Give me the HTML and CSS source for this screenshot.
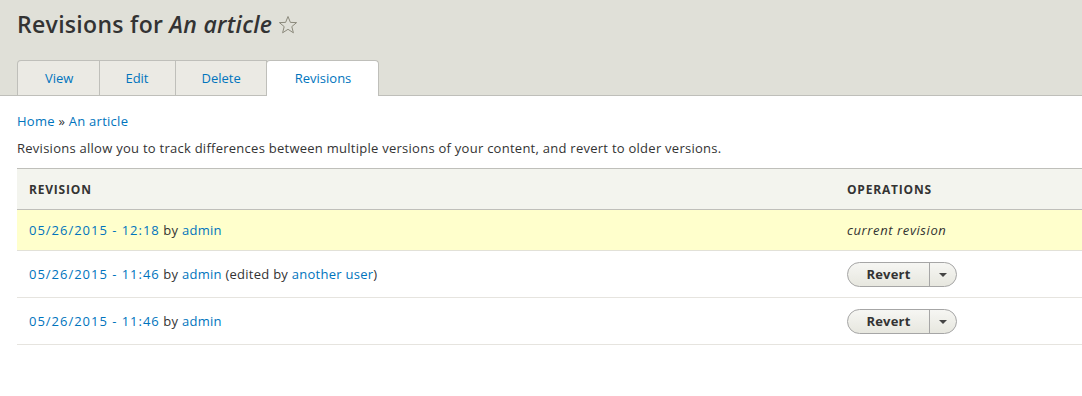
FILE: index.html
```html
<!DOCTYPE html>
<html lang="en">
  <head>
    <meta charset="UTF-8" />
    <title>Revisions for An article</title>
    <link rel="stylesheet" href="styles.css">
  </head>
  <body>
    <div class="header">
      <h1 class="page-title">
        Revisions for <em>An article</em>
        <svg class="star" width="20" height="20" viewBox="0 0 20 20">
          <path d="M10 1.5 L12.4 7.4 L18.6 7.6 L13.8 11.6 L15.4 17.8 L10 14.3 L4.6 17.8 L6.2 11.6 L1.4 7.6 L7.6 7.4 Z" fill="none" stroke="#8c8a7c" stroke-width="1" stroke-linejoin="round" />
        </svg>
      </h1>
      <ul class="tabs">
        <li class="tab first"><a href="#">View</a></li>
        <li class="tab"><a href="#">Edit</a></li>
        <li class="tab"><a href="#">Delete</a></li>
        <li class="tab active"><a href="#">Revisions</a></li>
      </ul>
    </div>

    <div class="content">
      <div class="breadcrumb"><a href="#">Home</a> » <a href="#">An article</a></div>
      <p class="help">Revisions allow you to track differences between multiple versions of your content, and revert to older versions.</p>

      <table class="revisions">
        <thead>
          <tr>
            <th>Revision</th>
            <th class="ops">Operations</th>
          </tr>
        </thead>
        <tbody>
          <tr class="current">
            <td><a class="date" href="#">05/26/2015 - 12:18</a> by <a href="#">admin</a></td>
            <td class="ops"><em>current revision</em></td>
          </tr>
          <tr>
            <td><a class="date" href="#">05/26/2015 - 11:46</a> by <a href="#">admin</a> (edited by <a href="#">another user</a>)</td>
            <td class="ops">
              <div class="split-button">
                <button class="main">Revert</button><button class="toggle"><span class="caret"></span></button>
              </div>
            </td>
          </tr>
          <tr>
            <td><a class="date" href="#">05/26/2015 - 11:46</a> by <a href="#">admin</a></td>
            <td class="ops">
              <div class="split-button">
                <button class="main">Revert</button><button class="toggle"><span class="caret"></span></button>
              </div>
            </td>
          </tr>
        </tbody>
      </table>
    </div>
  </body>
</html>
```

FILE: styles.css
```css
body {
  margin: 0;
  font-family: "Open Sans", "DejaVu Sans", sans-serif;
  font-size: 13px;
  letter-spacing: 0.26px;
  color: #333;
  background: #fff;
}
a {
  color: #0074bd;
  text-decoration: none;
}
.header {
  background-color: #e0e0d8;
  padding: 9px 0 0 17px;
  border-bottom: 1px solid #bfbfba;
}
.page-title {
  margin: 0;
  font-size: 23px;
  font-weight: 600;
  letter-spacing: 0.3px;
  line-height: 30px;
  color: #333;
  display: flex;
  align-items: center;
  gap: 6px;
}
.page-title em {
  font-style: italic;
}
.star {
  margin-top: 1px;
}
.tabs {
  list-style: none;
  margin: 21px 0 0 0;
  padding: 0;
  display: flex;
  letter-spacing: 0;
}
.tab {
  background-color: #ebeae4;
  border: 1px solid #bfbfba;
  border-bottom: none;
  border-left: none;
  height: 34px;
  margin-bottom: -1px;
}
.tab.first {
  border-left: 1px solid #bfbfba;
  border-top-left-radius: 4px;
}
.tab a {
  display: block;
  line-height: 34px;
  padding: 0 27px;
  font-size: 13px;
}
.tab.first a {
  padding: 0 26px 0 27px;
}
.tab:nth-child(2) a {
  padding: 0 26px 0 25px;
}
.tab:nth-child(3) a {
  padding: 0 25px 0 26px;
}
.tab.active {
  background-color: #fff;
  border-left: 1px solid #bfbfba;
  border-radius: 4px 4px 0 0;
  margin-left: -1px;
  height: 35px;
}
.tab.active a {
  padding: 0 27px 0 28px;
}
.content {
  padding: 15px 0 0 17px;
}
.breadcrumb {
  line-height: 20px;
}
.help {
  margin: 7px 0 10px;
  line-height: 20px;
}
.revisions {
  width: 100%;
  border-collapse: collapse;
}
.revisions th {
  background-color: #f3f4ee;
  border-top: 1px solid #bfbfba;
  border-bottom: 1px solid #bfbfba;
  text-align: left;
  text-transform: uppercase;
  font-size: 12px;
  font-weight: 700;
  letter-spacing: 0.8px;
  color: #333;
  padding: 0 12px;
  height: 40px;
}
.revisions td {
  border-bottom: 1px solid #e6e4df;
  padding: 0 12px;
  height: 40px;
}
.revisions tbody tr:not(.current) td {
  height: 46px;
}
.revisions tr.current td {
  background-color: #ffffcc;
  border-bottom-color: #e2e1d8;
}
.revisions .ops {
  width: 223px;
}
.revisions .ops em {
  letter-spacing: 0.6px;
}
.date {
  letter-spacing: 0.98px;
}
.split-button {
  display: inline-flex;
  border: 1px solid #a6a6a6;
  border-radius: 13px;
  overflow: hidden;
  background: linear-gradient(#f6f6f3, #e7e7df);
  height: 23px;
  vertical-align: middle;
}
.split-button button {
  font-family: inherit;
  font-size: 13px;
  font-weight: 700;
  letter-spacing: 0.2px;
  color: #333;
  background: transparent;
  border: none;
  padding: 0;
  cursor: pointer;
}
.split-button .main {
  width: 82px;
  border-right: 1px solid #a6a6a6;
}
.split-button .toggle {
  width: 26px;
  display: flex;
  align-items: center;
  justify-content: center;
}
.caret {
  width: 0;
  height: 0;
  margin-top: 1px;
  border-left: 4px solid transparent;
  border-right: 4px solid transparent;
  border-top: 4px solid #444;
}
```
